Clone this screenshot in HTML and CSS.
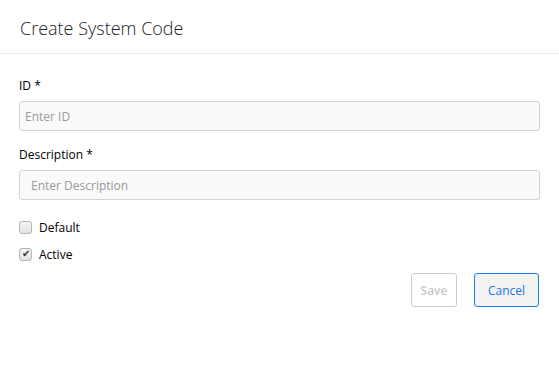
FILE: index.html
```html
<!DOCTYPE html>
<html lang="en">
<head>
    <meta charset="UTF-8">
    <title>Create System Code</title>
    <link rel="stylesheet" href="styles.css">
</head>
<body>
    <div class="modal">
        <div class="modal-header">
            <h1>Create System Code</h1>
        </div>
        <div class="modal-body">
            <div class="field">
                <label class="field-label">ID *</label>
                <input class="field-input" type="text" placeholder="Enter ID">
            </div>
            <div class="field">
                <label class="field-label">Description *</label>
                <input class="field-input wide-pad" type="text" placeholder="Enter Description">
            </div>
            <label class="check"><input type="checkbox"> Default</label>
            <label class="check"><input type="checkbox" checked> Active</label>
            <div class="actions">
                <button class="btn btn-save" disabled>Save</button>
                <button class="btn btn-cancel">Cancel</button>
            </div>
        </div>
    </div>
</body>
</html>
```

FILE: styles.css
```css
body {
    margin: 0;
    font-family: "Open Sans", Arial, sans-serif;
    background-color: #fff;
    color: #212529;
}
.modal {
    width: 559px;
    height: 378px;
    box-sizing: border-box;
    background-color: #fff;
}
.modal-header {
    height: 54px;
    box-sizing: border-box;
    border-bottom: 1px solid #e9ecef;
    padding: 15px 20px 0;
}
.modal-header h1 {
    margin: 0;
    font-size: 18px;
    font-weight: 300;
    color: #222;
    line-height: 26px;
}
.modal-body {
    padding: 24px 19px 0 19px;
}
.field {
    margin-bottom: 16px;
}
.field-label {
    display: block;
    font-size: 12px;
    font-weight: 500;
    color: #000;
    line-height: 16px;
    margin-bottom: 7px;
}
.field-input {
    display: block;
    width: 100%;
    box-sizing: border-box;
    height: 30px;
    border: 1px solid #ced4da;
    border-radius: 3px;
    background-color: #fafafa;
    padding: 0 5px;
    font-family: inherit;
    font-size: 12px;
    color: #495057;
}
.field-input.wide-pad {
    padding-left: 11px;
}
.field-input::placeholder {
    color: #999;
}
.check {
    display: flex;
    align-items: center;
    gap: 7px;
    font-size: 12px;
    font-weight: 500;
    color: #000;
    height: 18px;
    margin-bottom: 9px;
}
.check:first-of-type {
    margin-top: 18px;
}
.check input {
    appearance: none;
    margin: 0;
    width: 13px;
    height: 13px;
    box-sizing: border-box;
    border: 1px solid #b5b5b5;
    border-radius: 3px;
    background: linear-gradient(#f4f4f4, #e2e2e2);
    display: flex;
    align-items: center;
    justify-content: center;
}
.check input:checked::after {
    content: "\2714";
    font-size: 10px;
    line-height: 1;
    color: #333;
}
.actions {
    display: flex;
    justify-content: flex-end;
    gap: 17px;
    margin-top: 10px;
    padding-right: 1px;
}
.btn {
    height: 34px;
    border-radius: 3px;
    font-family: inherit;
    font-size: 12px;
    padding: 0;
}
.btn-save {
    width: 46px;
    background-color: #fff;
    border: 1px solid #ccc;
    color: #c8c8c8;
    font-weight: 600;
}
.btn-cancel {
    width: 65px;
    background-color: #f3f3f3;
    border: 1px solid #1a7df0;
    color: #1a73e8;
}
```
